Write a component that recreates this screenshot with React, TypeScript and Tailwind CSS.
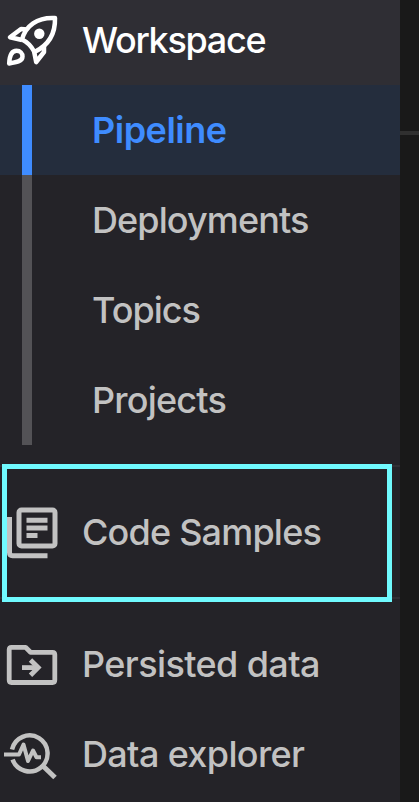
import type { ReactNode } from "react";

function RocketIcon() {
  return (
    <svg viewBox="0 10 60 60" className="h-[60px] w-[60px] shrink-0" fill="none" stroke="#fff" strokeWidth="4.5" strokeLinejoin="round">
      <path d="M22 39.5C25.5 26 37 17 55 18C55.5 35 47 46 34.5 52C31.5 46.5 27.5 42 22 39.5Z" />
      <path d="M27.5 29.5L21 29L10 37.2L22 40" />
      <path d="M44 45.5V52L36.2 62L34 51" />
      <path d="M9.2 63.5C9.5 56 11.5 50.8 16.5 50.8C20.3 50.8 22.5 53.5 22.5 56.5C22.5 61.5 16 62.5 9.2 63.5Z" />
      <circle cx="39.3" cy="33.7" r="5.2" fill="#fff" stroke="none" />
    </svg>
  );
}

function SamplesIcon() {
  return (
    <svg viewBox="0 502 60 60" className="h-[60px] w-[60px] shrink-0" fill="none" stroke="#c2c2c2" strokeWidth="5">
      <rect x="19" y="510" width="36" height="36" rx="2.5" />
      <path d="M9.5 517V552.5Q9.5 555.7 12.5 555.7H47.5" />
      <path d="M26.5 520.3H47.5M26.5 528H47.5M26.5 535.5H37.5" />
    </svg>
  );
}

function FolderIcon() {
  return (
    <svg viewBox="0 634 60 60" className="h-[60px] w-[60px] shrink-0" fill="none" stroke="#c2c2c2" strokeWidth="4.8" strokeLinejoin="round">
      <path d="M11.5 647.3H25.5L30.5 652.3H52.5Q54.8 652.3 54.8 654.6V680Q54.8 682.5 52.5 682.5H11.5Q9.2 682.5 9.2 680V649.6Q9.2 647.3 11.5 647.3Z" />
      <path d="M22 667.6H37" />
      <path d="M30.5 660L38.2 667.6L30.5 675.2" strokeLinejoin="miter" />
    </svg>
  );
}

function ExplorerIcon() {
  return (
    <svg viewBox="0 724 60 60" className="h-[60px] w-[60px] shrink-0" fill="none" stroke="#c2c2c2" strokeWidth="4.5" strokeLinejoin="round">
      <path d="M12 749.5A18 18 0 1 1 12.6 759.5" />
      <path d="M43 766L55 777.5" strokeWidth="5" />
      <path d="M4 754.5H19L23.5 744.5L28 761L33 750.5L36.5 757.2H41" strokeWidth="4" />
    </svg>
  );
}

function Item({ icon, label, className }: { icon: ReactNode; label: string; className: string }) {
  return (
    <div className={`flex h-[90px] shrink-0 items-center gap-[22px] ${className}`}>
      {icon}
      <span>{label}</span>
    </div>
  );
}

const pages = [
  { label: "Deployments", tracking: "tracking-[-0.9px]" },
  { label: "Topics", tracking: "tracking-[-1px]" },
  { label: "Projects", tracking: "tracking-[-0.8px]" },
];

export default function App() {
  return (
    <div className="flex h-[802px] w-[419px] overflow-hidden bg-[#191919] font-['Inter',sans-serif] text-[36px] leading-[44px] font-medium whitespace-nowrap text-[#c2c2c2]">
      <aside className="flex w-[400px] shrink-0 flex-col bg-[#242328]">
        <div className="flex h-[85px] shrink-0 items-center gap-[22px] bg-[#2f2e34] pb-[5px] text-white">
          <RocketIcon />
          <span className="tracking-[-1.3px]">Workspace</span>
        </div>
        <nav className="shrink-0">
          <div className="flex h-[90px] items-center bg-[#242d3d] font-semibold text-[#3f8cff]">
            <i className="ml-[22px] h-full w-[10px] bg-[#3f8cff]" />
            <span className="ml-[60px] tracking-[-0.5px]">Pipeline</span>
          </div>
          {pages.map(({ label, tracking }) => (
            <div key={label} className="flex h-[90px] items-center">
              <i className="ml-[22px] h-full w-[10px] bg-[#535256]" />
              <span className={`ml-[60px] ${tracking}`}>{label}</span>
            </div>
          ))}
        </nav>
        <section className="mt-[20px] flex h-[134px] shrink-0 items-start border-y-2 border-[#302f34]">
          <div className="-mt-[3px] ml-[2px] flex h-[138px] w-[390px] shrink-0 items-center border-[5px] border-[#70faff] pb-[2px]">
            <div className="-ml-[7px] flex [clip-path:inset(0_0_0_7px)]">
              <Item icon={<SamplesIcon />} label="Code Samples" className="tracking-[-0.8px]" />
            </div>
          </div>
        </section>
        <Item icon={<FolderIcon />} label="Persisted data" className="mt-[20px] tracking-[-0.6px]" />
        <Item icon={<ExplorerIcon />} label="Data explorer" className="tracking-[-0.65px]" />
      </aside>
      <div className="h-full w-[19px] pt-[131px]">
        <div className="h-[4px] bg-[#303030]" />
      </div>
    </div>
  );
}
